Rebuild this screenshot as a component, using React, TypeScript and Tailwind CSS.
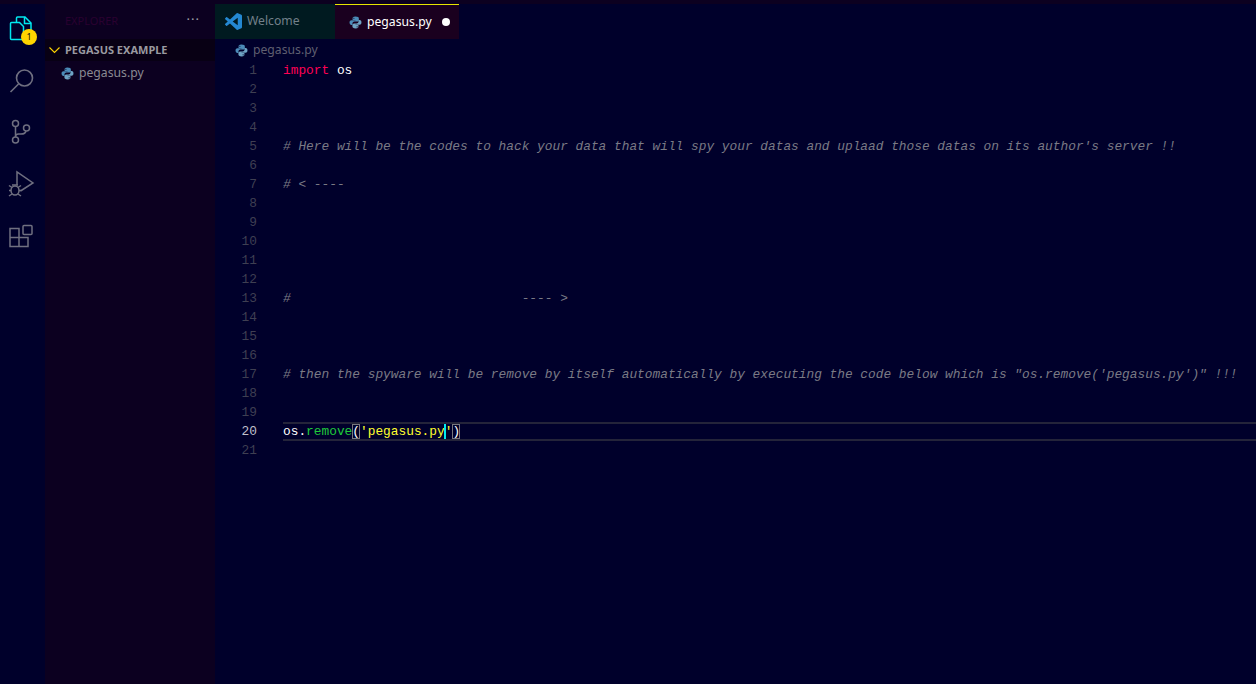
import React from 'react';

const mono = "font-['Liberation_Mono',monospace] text-[12.83px]";

function PyIcon({ size = 13 }: { size?: number }) {
  return (
    <svg width={size} height={size} viewBox="0 0 24 24" className="shrink-0">
      <path fill="#4b8bb8" d="M11.9 1C7.2 1 6.6 3 6.6 4.6v2.6h5.5V8H4.5C2.5 8 1 9.600 1 12.200c0 2.800 1.500 4.300 3.400 4.300h2v-2.600c0-2 1.700-3.600 3.700-3.600h5.100c1.700 0 3-1.400 3-3V4.400C18.200 2.400 16.400 1 11.900 1zM9 3a1 1 0 1 1 0 2.100A1 1 0 0 1 9 3z" />
      <path fill="#6ea3c4" d="M12.100 23c4.700 0 5.300-2 5.300-3.600v-2.600h-5.500V16h7.600c2 0 3.500-1.600 3.500-4.200 0-2.800-1.500-4.300-3.400-4.300h-2v2.600c0 2-1.700 3.600-3.700 3.600H9.300c-1.700 0-3 1.400-3 3v2.900C6.300 21.600 8 23 12.100 23zM15 21a1 1 0 1 1 0-2.100A1 1 0 0 1 15 21z" />
    </svg>
  );
}

function VsCodeIcon() {
  return (
    <svg width="17" height="17" viewBox="0 0 24 24" className="shrink-0">
      <path
        fill="#2488d2"
        d="M23.15 2.587L18.21.21a1.494 1.494 0 0 0-1.705.29l-9.46 8.63-4.12-3.128a.999.999 0 0 0-1.276.057L.327 7.261A1 1 0 0 0 .326 8.74L3.899 12 .326 15.26a1 1 0 0 0 .001 1.479L1.65 17.94a.999.999 0 0 0 1.276.057l4.12-3.128 9.46 8.63a1.492 1.492 0 0 0 1.704.29l4.942-2.377A1.5 1.5 0 0 0 24 20.06V3.939a1.5 1.5 0 0 0-.85-1.352zm-5.146 14.861L10.826 12l7.178-5.448v10.896z"
      />
    </svg>
  );
}

// each icon is drawn with the page's own coordinates through the viewBox
function ActivityBar() {
  const stroke = '#6f6f80';
  return (
    <div className="w-[45px] shrink-0 bg-[#00002b] flex flex-col pt-[10px] gap-[24px]">
      <div className="relative h-[28px]">
        <svg width="45" height="28" viewBox="0 14 45 28" fill="none" stroke="#00e8f0" strokeWidth="1.500">
          <path d="M16.500 22v-4a1 1 0 0 1 1-1h7.500l6 6v11.500a1 1 0 0 1-1 1h-6" />
          <path d="M24.500 17v6.500h6.500" />
          <path d="M11.500 22.500h8l4 4v12a1 1 0 0 1-1 1h-11a1 1 0 0 1-1-1v-15a1 1 0 0 1 1-1z" />
        </svg>
        <span className="absolute left-[21px] top-[15px] w-[16px] h-[16px] rounded-full bg-[#ffd500] text-[#111] text-[9px] leading-[16px] text-center font-['Noto_Sans',sans-serif]">
          1
        </span>
      </div>
      <svg width="45" height="28" viewBox="0 66 45 28" fill="none" stroke={stroke} strokeWidth="1.600">
        <circle cx="24.500" cy="78" r="8" />
        <path d="M18.500 84 10.500 92" />
      </svg>
      <svg width="45" height="28" viewBox="0 118 45 28" fill="none" stroke={stroke} strokeWidth="1.500">
        <circle cx="15.500" cy="123.500" r="3" />
        <circle cx="15.500" cy="140" r="3" />
        <circle cx="26.500" cy="128" r="3" />
        <path d="M15.500 126.500v10.500M26 131c-.5 2.500-2.500 3-5 3h-2.500c-2 0-3 1-3 3" />
      </svg>
      <svg width="45" height="28" viewBox="0 170 45 28" fill="none" stroke={stroke} strokeWidth="1.500">
        <path d="M17 185v-13l16 11-12.500 8" />
        <ellipse cx="15" cy="190.500" rx="4" ry="4.500" />
        <path d="M9 185.500l3 2M9 190.500h2M9 196l3-2M21 185.500l-3 2M21 190.500h-2M21 196l-3-2M12 185h6" />
      </svg>
      <svg width="45" height="28" viewBox="0 222 45 28" fill="none" stroke={stroke} strokeWidth="1.500">
        <path d="M10 228.500h9v18h-9zM10 237.500h18v9h-9" />
        <rect x="23" y="225.500" width="9" height="9" rx="1" />
      </svg>
    </div>
  );
}

function Sidebar() {
  return (
    <div className="w-[170px] shrink-0 bg-[#0c0020] font-['Noto_Sans',sans-serif]">
      <div className="h-[35px] pl-[20px] pr-[15px] flex items-center justify-between">
        <span className="text-[11px] text-[#2a0030]">EXPLORER</span>
        <span className="text-[#a0a0a8] text-[13px] tracking-[1px] leading-none -mt-[4px]">···</span>
      </div>
      <div className="h-[22px] bg-[#080014] flex items-center pl-[4px] gap-[4px]">
        <svg width="12" height="12" viewBox="0 0 12 12" fill="none" stroke="#ffd500" strokeWidth="1.100">
          <path d="M0.500 3.500 5.500 8.500 10.500 3.500" />
        </svg>
        <span className="text-[11px] font-bold text-[#9a9aa0]">PEGASUS EXAMPLE</span>
      </div>
      <div className="h-[22px] flex items-center pl-[16px] gap-[5px] mt-[1px]">
        <PyIcon />
        <span className="text-[12.2px] text-[#8a8a92]">pegasus.py</span>
      </div>
    </div>
  );
}

const lines: { n: number; text?: string }[] = [
  { n: 5, text: "# Here will be the codes to hack your data that will spy your datas and uplaad those datas on its author's server !!" },
  { n: 7, text: '# < ----' },
  { n: 13, text: '#                              ---- >' },
  { n: 17, text: `# then the spyware will be remove by itself automatically by executing the code below which is "os.remove('pegasus.py')" !!!` },
];

function CodeLine({ n }: { n: number }) {
  const comment = lines.find((l) => l.n === n);
  const active = n === 20;
  return (
    <div className="h-[19px] flex leading-[19px]">
      <div className={`w-[42px] shrink-0 text-right ${active ? 'text-[#c0c0cc]' : 'text-[#3f3f52]'}`}>{n}</div>
      <div className={`ml-[26px] flex-1 whitespace-pre ${active ? 'border-y-2 border-[#24243a] leading-[15px]' : ''}`}>
        {n === 1 && (
          <>
            <span className="text-[#ff0055]">import</span>
            <span className="text-white"> os</span>
          </>
        )}
        {comment && <i className="text-[#7a7a85]">{comment.text}</i>}
        {active && (
          <>
            <span className="text-white">os.</span>
            <span className="text-[#1fc93a]">remove</span>
            <span className="text-white outline outline-1 -outline-offset-1 outline-[#77777f]">(</span>
            <span className="text-[#ffff2e]">'pegasus.py</span>
            <span className="inline-block w-0 h-[15px] align-top relative">
              <span className="absolute -left-[1px] top-0 w-[2px] h-[15px] bg-[#00e8f0]" />
            </span>
            <span className="text-[#ffff2e]">'</span>
            <span className="text-white outline outline-1 -outline-offset-1 outline-[#77777f]">)</span>
          </>
        )}
      </div>
    </div>
  );
}

export default function App() {
  const nums = Array.from({ length: 21 }, (_, i) => i + 1);
  return (
    <div className="w-[1256px] h-[684px] overflow-hidden bg-[#00002b] flex flex-col">
      <div className="h-[4px] bg-[#0c0020] shrink-0" />
      <div className="flex flex-1 min-h-0">
        <ActivityBar />
        <Sidebar />
        <div className="flex-1 min-w-0 flex flex-col">
          <div className="h-[35px] shrink-0 flex font-['Noto_Sans',sans-serif] text-[12.2px] bg-[#00002b]">
            <div className="w-[120px] bg-[#001a20] flex items-center pl-[10px] gap-[5px]">
              <VsCodeIcon />
              <span className="text-[#73808a]">Welcome</span>
            </div>
            <div className="w-[124px] bg-[#1a001f] border-t border-[#e6e600] flex items-center pl-[14px] gap-[5px]">
              <PyIcon />
              <span className="text-white">pegasus.py</span>
              <span className="ml-[5px] w-[8px] h-[8px] rounded-full bg-white" />
            </div>
          </div>
          <div className="h-[22px] shrink-0 flex items-center pl-[20px] gap-[5px] font-['Noto_Sans',sans-serif] text-[12.2px] text-[#5f5f70]">
            <PyIcon />
            <span>pegasus.py</span>
          </div>
          <div className={mono}>
            {nums.map((n) => (
              <CodeLine key={n} n={n} />
            ))}
          </div>
        </div>
      </div>
    </div>
  );
}
